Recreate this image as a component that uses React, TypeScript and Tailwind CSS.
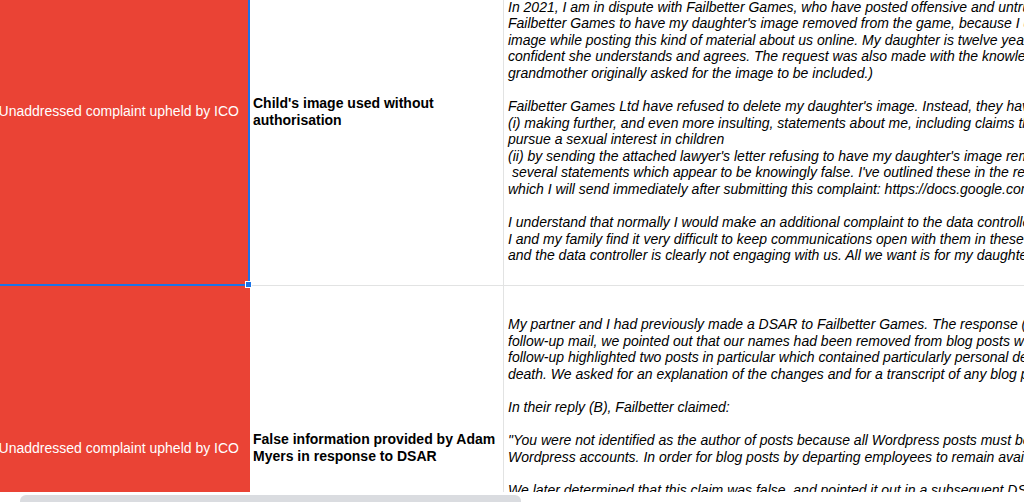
const complaintOne = [
  "In 2021, I am in dispute with Failbetter Games, who have posted offensive and untrue material about",
  "Failbetter Games to have my daughter's image removed from the game, because I do not want",
  "image while posting this kind of material about us online. My daughter is twelve years old and",
  "confident she understands and agrees. The request was also made with the knowledge that her",
  "grandmother originally asked for the image to be included.)",
  "",
  "Failbetter Games Ltd have refused to delete my daughter's image. Instead, they have responded by",
  "(i) making further, and even more insulting, statements about me, including claims that I",
  "pursue a sexual interest in children",
  "(ii) by sending the attached lawyer's letter refusing to have my daughter's image removed, which",
  "\u00a0several statements which appear to be knowingly false. I've outlined these in the response",
  "which I will send immediately after submitting this complaint: https://docs.google.com/document",
  "",
  "I understand that normally I would make an additional complaint to the data controller, however",
  "I and my family find it very difficult to keep communications open with them in these circumstances",
  "and the data controller is clearly not engaging with us. All we want is for my daughter's image",
];

const complaintTwo = [
  "My partner and I had previously made a DSAR to Failbetter Games. The response (A) was",
  "follow-up mail, we pointed out that our names had been removed from blog posts which we",
  "follow-up highlighted two posts in particular which contained particularly personal details",
  "death. We asked for an explanation of the changes and for a transcript of any blog posts",
  "",
  "In their reply (B), Failbetter claimed:",
  "",
  "\"You were not identified as the author of posts because all Wordpress posts must be made by",
  "Wordpress accounts. In order for blog posts by departing employees to remain available, they",
  "",
  "We later determined that this claim was false, and pointed it out in a subsequent DSAR",
];

function Lines({ lines }: { lines: string[] }) {
  return (
    <>
      {lines.map((line, i) => (
        <div key={i} className="h-[16.6px] whitespace-nowrap leading-[16.6px]">
          {line || "\u00a0"}
        </div>
      ))}
    </>
  );
}

export default function App() {
  return (
    <div className="relative h-[502px] w-[1024px] overflow-hidden bg-white font-['Liberation_Sans',Arial,sans-serif] text-[14px] text-black">
      <div className="h-[492px] overflow-hidden">
        <div className="-mt-[61px]">
          {/* Row 1 (selected status cell) */}
          <div className="flex h-[347px]">
            <div className="relative z-10 flex w-[250px] shrink-0 items-center justify-end overflow-visible border-r-2 border-b-2 border-[#1a73e8] bg-[#ea4335] pr-[9px] text-white">
              <span className="whitespace-nowrap">Unaddressed complaint upheld by ICO</span>
              <div className="absolute -right-[4px] -bottom-[4px] h-[7px] w-[7px] border border-white bg-[#1a73e8]" />
            </div>
            <div className="flex w-[254px] shrink-0 items-center border-r border-b border-[#e2e3e3] pl-[3px] leading-[17px] font-bold">
              <div>
                Child's image used without
                <br />
                authorisation
              </div>
            </div>
            <div className="flex min-w-0 flex-1 flex-col justify-end overflow-hidden border-b border-[#e2e3e3] pb-[21px] pl-[4px] italic">
              <Lines lines={complaintOne} />
            </div>
          </div>

          {/* Row 2 */}
          <div className="flex h-[324px]">
            <div className="flex w-[250px] shrink-0 items-center justify-end bg-[#ea4335] pr-[11px] text-white">
              <span className="whitespace-nowrap">Unaddressed complaint upheld by ICO</span>
            </div>
            <div className="flex w-[254px] shrink-0 items-center border-r border-[#e2e3e3] pl-[3px] leading-[17px] font-bold">
              <div>
                False information provided by Adam
                <br />
                Myers in response to DSAR
              </div>
            </div>
            <div className="min-w-0 flex-1 overflow-hidden pt-[30px] pl-[4px] italic">
              <Lines lines={complaintTwo} />
            </div>
          </div>
        </div>
      </div>

      {/* horizontal scrollbar */}
      <div className="flex h-[10px] items-end pl-[20px]">
        <div className="h-[7px] w-[501px] rounded-tl-[6px] rounded-tr-[6px] bg-[#dadce0]" />
      </div>
    </div>
  );
}
